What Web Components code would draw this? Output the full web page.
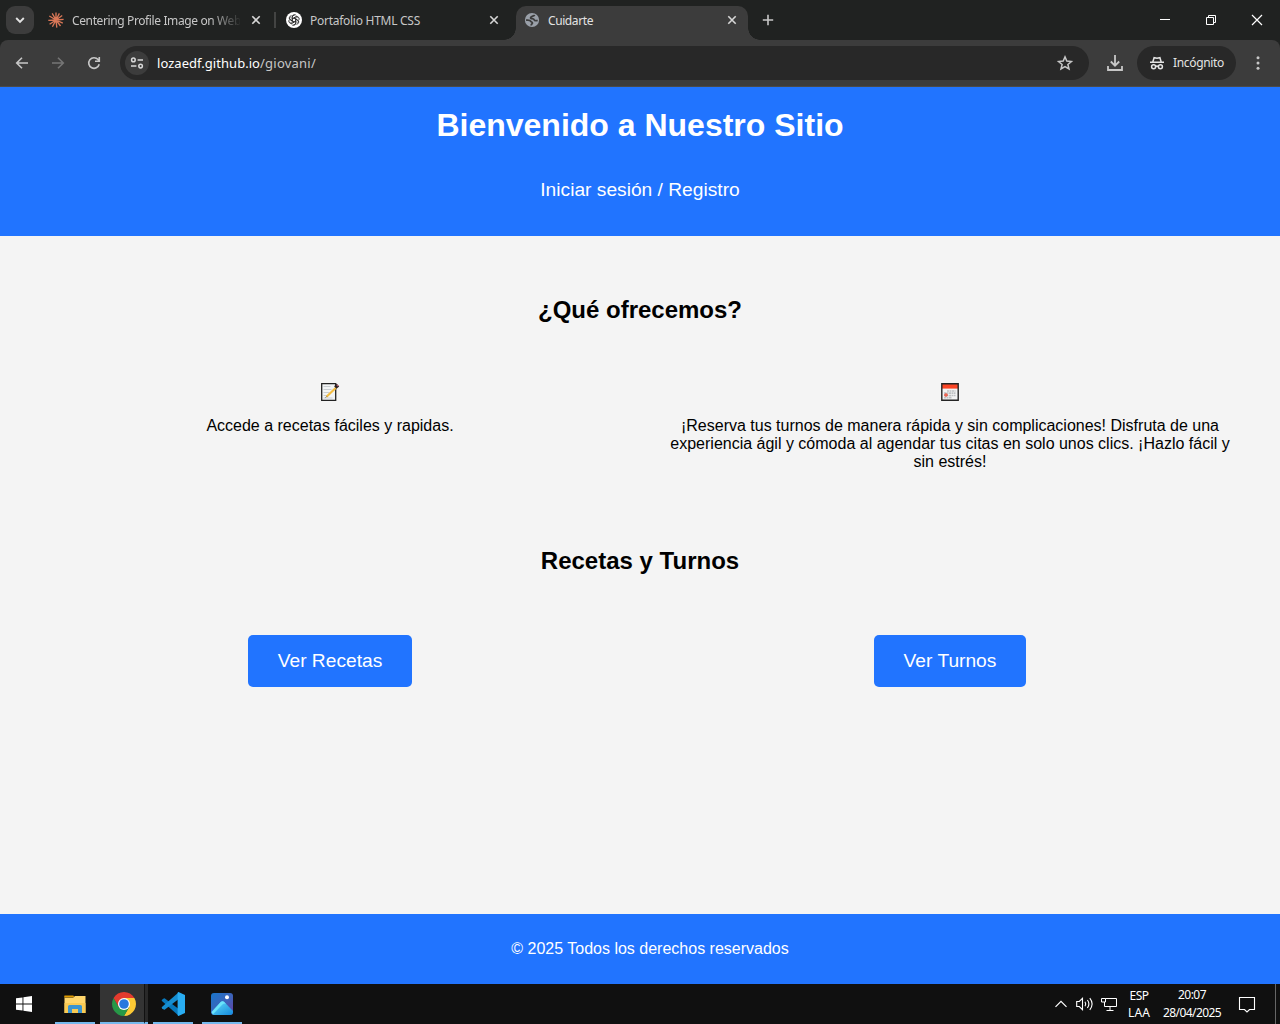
<!DOCTYPE html>
<html lang="es">
<head>
<meta charset="utf-8">
<title>Cuidarte</title>
<style>
html,body{margin:0;height:100%;overflow:hidden}
body{display:flex;flex-direction:column;background:#f4f4f4;font-family:"Liberation Sans",Arial,sans-serif;font-size:16px;color:#000}
</style>
</head>
<body>
<browser-tabs></browser-tabs>
<browser-toolbar></browser-toolbar>
<site-page></site-page>
<task-bar></task-bar>
<script>
const define = (name, css, html, ready) => customElements.define(name, class extends HTMLElement {
  constructor() {
    super();
    this.attachShadow({mode: 'open'}).innerHTML = `<style>:host,*{box-sizing:border-box}svg{display:block;overflow:visible}${css}</style>${html}`;
  }
  connectedCallback() { if (ready) ready.call(this); }
});

/* One line of interface text whose tracking is tuned to a given width. */
define('ui-label', `:host{display:block;white-space:nowrap;font-family:"Noto Sans","Open Sans",sans-serif;line-height:16px}span{display:inline-block}`,
  `<span><slot></slot></span>`, function () {
    const s = this.shadowRoot.querySelector('span'), w = +this.getAttribute('w');
    this.style.width = w + 'px';
    const n = this.textContent.length;
    s.style.letterSpacing = ((w - s.getBoundingClientRect().width) / n).toFixed(3) + 'px';
  });

define('browser-tab', `
:host{display:flex;align-items:center;position:relative;width:238px;height:34px;padding:0 14px 6px 10px;color:#c7c7c7;font-size:12px}
:host([active]){background:#3c3c3c;border-radius:10px 10px 0 0;color:#e3e3e3;width:232px;padding-left:8px;padding-right:10px}
.icon{width:16px;height:16px;margin-right:8px;flex:none}
.text{flex:1;min-width:0;overflow:hidden;padding-top:1px}
:host([fade]) .text{max-width:168px;-webkit-mask-image:linear-gradient(90deg,#000 138px,transparent 170px)}
.close{margin-left:auto;flex:none}
:host([active])::before,:host([active])::after{content:"";position:absolute;bottom:0;width:12px;height:12px}
:host([active])::before{left:-12px;background:radial-gradient(circle at 0 0,transparent 11.5px,#3c3c3c 12px)}
:host([active])::after{right:-12px;background:radial-gradient(circle at 100% 0,transparent 11.5px,#3c3c3c 12px)}
`, `<div class="icon"><slot name="icon"></slot></div><div class="text"><slot></slot></div>
<svg class="close" width="12" height="12" viewBox="0 0 12 12"><path d="M2.3 2.3l7.4 7.4M9.7 2.3L2.3 9.7" stroke="#d6d6d6" stroke-width="1.6"/></svg>`);

define('browser-tabs', `
:host{display:flex;height:40px;flex:none;background:#202221;padding-top:6px}
.drop{width:28px;height:28px;border-radius:9px;background:#3c3c3c;margin:0 4px 0 6px;display:grid;place-items:center}
.sep{width:2px;height:16px;background:#434443;margin:6px 0 0 -2px}
.t3{margin-left:2px}
.plus{margin:8px 0 0 14px}
.win{margin-left:auto;display:flex;margin-top:-6px}
.win svg{margin:14px 17px}
`, `
<div class="drop"><svg width="10" height="8" viewBox="0 0 10 8"><path d="M1.2 2L5 5.800 8.800 2" fill="none" stroke="#e3e3e3" stroke-width="1.900"/></svg></div>
<browser-tab fade>
  <svg slot="icon" width="16" height="16" viewBox="0 0 16 16" style="display:block"><path d="M8 8V.5M8 8l3.400-6.600M8 8l6.200-4.500M8 8l7.600-.700M8 8l6.800 3.200M8 8l4.500 6M8 8l.800 7.600M8 8l-3.600 6.700M8 8l-6.400 4.200M8 8L.300 8.400M8 8L1.300 4M8 8L4.200 1.300" stroke="#d97757" stroke-width="1.350"/></svg>
  <ui-label w="169">Centering Profile Image on Web</ui-label>
</browser-tab>
<div class="sep"></div>
<browser-tab>
  <svg slot="icon" width="16" height="16" viewBox="0 0 16 16" style="display:block"><circle cx="8" cy="8" r="8" fill="#fff"/><g fill="none" stroke="#222" stroke-width=".75"><path id="lobe" d="M6.200 9.100V4.900a2.300 2.300 0 0 1 4.300-1.100M6.200 7L9.400 5.100a2.300 2.300 0 0 1 3.100 1"/><use href="#lobe" transform="rotate(60 8 8)"/><use href="#lobe" transform="rotate(120 8 8)"/><use href="#lobe" transform="rotate(180 8 8)"/><use href="#lobe" transform="rotate(240 8 8)"/><use href="#lobe" transform="rotate(300 8 8)"/></g></svg>
  <ui-label w="110">Portafolio HTML CSS</ui-label>
</browser-tab>
<browser-tab active class="t3">
  <svg slot="icon" width="16" height="16" viewBox="0 0 16 16" style="display:block"><circle cx="8" cy="8" r="7.100" fill="#9aa0a9"/><path d="M10.500 2.800C10.300 4.500 7 3.700 6.600 5.600c-.3 1.700 3.400.5 3.600 2.200.2 1.500 2.200.7 3.500.9M2 8.200c1.500-.2 4-.3 4.600 1 .5 1.100 2 .5 1.800 1.900-.1.900-1.300.9-1.200 2.400" fill="none" stroke="#3c3c3c" stroke-width="1.800"/></svg>
  <ui-label w="45">Cuidarte</ui-label>
</browser-tab>
<svg class="plus" width="12" height="12" viewBox="0 0 12 12"><path d="M6 .800v10.400M.800 6h10.400" stroke="#c7c7c7" stroke-width="1.600"/></svg>
<div class="win">
<svg width="12" height="12" viewBox="0 0 12 12"><path d="M1 5.500h10" stroke="#fff"/></svg>
<svg width="12" height="12" viewBox="0 0 12 12"><path d="M1.500 3.500h7v7h-7zM3.500 3.500v-2h7v7h-2" fill="none" stroke="#fff"/></svg>
<svg width="12" height="12" viewBox="0 0 12 12"><path d="M1 1l10 10M11 1L1 11" stroke="#fff" stroke-width="1.200"/></svg>
</div>`);

define('browser-toolbar', `
:host{display:block;background:#202221;height:47px;flex:none}
.bar{display:flex;align-items:center;height:47px;background:#3c3c3c;border-bottom:1px solid #4b4a48;border-radius:8px 8px 0 0;padding-left:14px}
.nav{display:flex;gap:20px;width:106px;flex:none}
.omni{display:flex;align-items:center;width:969px;height:34px;border-radius:17px;background:#282828;padding:0 16px 0 5px}
.chip{width:24px;height:24px;border-radius:50%;background:#3c3c3c;display:grid;place-items:center;margin-right:8px}
.host{color:#fff;font-size:13px}.path{color:#c7c7c7;font-size:13px}
.star{margin-left:auto}
.dl{margin:0 13px 0 17px}
.inc{display:flex;align-items:center;width:99px;height:34px;border-radius:17px;background:#282828;padding-left:12px;font-size:12px;color:#e3e3e3;gap:8px}
.menu{margin-left:14px}
`, `<div class="bar">
<div class="nav">
<svg width="16" height="16" viewBox="0 0 16 16"><path d="M14 8H3M8 2.700L2.700 8 8 13.300" fill="none" stroke="#c7c7c7" stroke-width="1.600"/></svg>
<svg width="16" height="16" viewBox="0 0 16 16"><path d="M2 8h11M8 2.700L13.300 8 8 13.300" fill="none" stroke="#757575" stroke-width="1.600"/></svg>
<svg width="16" height="16" viewBox="0 0 16 16"><path d="M13.200 9.300A5.300 5.300 0 1 1 12.100 4.600L13.300 6M13.300 2v4.300H9" fill="none" stroke="#c7c7c7" stroke-width="1.600"/></svg>
</div>
<div class="omni"><div class="chip"><svg width="14" height="14" viewBox="0 0 14 14" fill="none" stroke="#d8d8d8" stroke-width="1.500"><circle cx="3.400" cy="3.900" r="1.800"/><path d="M7.600 3.900H13M1 10.100h5.400"/><circle cx="10.600" cy="10.100" r="1.800"/></svg></div>
<ui-label class="host" w="103">lozaedf.github.io</ui-label><ui-label class="path" w="56">/giovani/</ui-label>
<svg class="star" width="16" height="16" viewBox="0 0 16 16"><path d="M8 1.900l1.800 4.200 4.600.400-3.500 3 1.100 4.500L8 11.600 4 14l1.100-4.500-3.500-3 4.600-.400z" fill="none" stroke="#c7c7c7" stroke-width="1.500"/></svg></div>
<svg class="dl" width="18" height="18" viewBox="0 0 18 18"><path d="M9 1v10.500M4.800 7.500L9 11.700l4.200-4.200M2 12v4h14v-4" fill="none" stroke="#c7c7c7" stroke-width="1.800"/></svg>
<div class="inc"><svg width="16" height="16" viewBox="0 0 16 16" fill="none" stroke="#e3e3e3" stroke-width="1.500"><path d="M1 7.200h14M3.800 7l1.300-4.300 2.900.600 2.900-.600L12.200 7M6.600 11.500q1.400-.900 2.800 0"/><circle cx="4.600" cy="11.700" r="2"/><circle cx="11.400" cy="11.700" r="2"/></svg><ui-label w="51">Incógnito</ui-label></div>
<svg class="menu" width="16" height="16" viewBox="0 0 16 16" fill="#c7c7c7"><circle cx="8" cy="2.800" r="1.500"/><circle cx="8" cy="8" r="1.500"/><circle cx="8" cy="13.200" r="1.500"/></svg>
</div>`);

define('action-link', `
:host{display:block}a{display:block;background:#2174ff;color:#fff;border-radius:5px;padding:15px 30px;font-size:19.2px;line-height:22px}
`, `<a><slot></slot></a>`);

define('feature-item', `
:host{display:flex;flex-direction:column;align-items:center;width:580px;padding:0 10px;text-align:center;line-height:18px}
.pic{width:20px;height:20px;margin-bottom:15px}
`, `<div class="pic"><slot name="icon"></slot></div><div><slot></slot></div>`);

define('site-page', `
:host{display:flex;flex-direction:column;flex:1;min-height:0;background:#f4f4f4}
header{height:149px;flex:none;background:#2174ff;color:#fff;text-align:center;padding-top:20px}
h1{margin:0;font-size:32px;line-height:36px}
.login{font-size:19.2px;line-height:22px;margin-top:36px}
main{flex:1}
h2{margin:0;text-align:center;font-size:24px;line-height:28px}
.offer{padding-top:60px}
.row{display:flex;justify-content:space-between;padding:0 40px}
.features{margin-top:58px}
.actions h2{margin-top:76px}
.actions .row{margin-top:60px}
.cell{width:580px;display:flex;justify-content:center}
footer{height:70px;flex:none;background:#2174ff;color:#fff;text-align:center;line-height:18px;padding:26px 0 0 20px}
`, `
<header><h1>Bienvenido a Nuestro Sitio</h1><div class="login">Iniciar sesión / Registro</div></header>
<main>
<section class="offer"><h2>¿Qué ofrecemos?</h2>
<div class="row features">
<feature-item><svg slot="icon" width="20" height="20" viewBox="0 0 20 20" style="display:block"><path d="M1.700 1.700h14v16.600h-14z" fill="#f2f4f5" stroke="#222" stroke-width="1.300"/><path d="M3.500 4.500h7M3.500 7.500h8M3.500 10.500h6M3.500 13.500h4M3.500 16h9" stroke="#c9ced1"/><path d="M6.500 14.700L16.700 5" stroke="#f4bd42" stroke-width="2.200"/><path d="M15.300 5.500l2.700-2.300" stroke="#2b2224" stroke-width="3.600"/><path d="M17 4l1-1" stroke="#b85c6b" stroke-width="1.600"/><path d="M5.700 15.500l1-1" stroke="#444"/></svg>Accede a recetas fáciles y rapidas.</feature-item>
<feature-item><svg slot="icon" width="20" height="20" viewBox="0 0 20 20" style="display:block"><path d="M2 2h16v16H2z" fill="#f3f3f3"/><path d="M2 2h16v4.600H2z" fill="#fb4525"/><path d="M1.800 1.800h16.400v16.400H1.800z" fill="none" stroke="#242424" stroke-width="1.400"/><path d="M7 9h8.500M4 11.200h11.500M4 13.500h11.500M4 15.700h8" stroke="#bfc1c3" stroke-width="1.700" stroke-dasharray="2 .500"/><path d="M4 13h4M6 11v4" stroke="#ed5b48" stroke-width="1.300"/></svg>¡Reserva tus turnos de manera rápida y sin complicaciones! Disfruta de una experiencia ágil y cómoda al agendar tus citas en solo unos clics. ¡Hazlo fácil y sin estrés!</feature-item>
</div></section>
<section class="actions"><h2>Recetas y Turnos</h2>
<div class="row"><div class="cell"><action-link>Ver Recetas</action-link></div><div class="cell"><action-link>Ver Turnos</action-link></div></div></section>
</main>
<footer>© 2025 Todos los derechos reservados</footer>`);

define('task-button', `
:host{display:grid;place-items:center;width:40px;height:40px;border-bottom:2px solid #76b9ed;padding-top:2px;flex:none}
`, `<slot></slot>`);

define('task-bar', `
:host{display:flex;height:40px;flex:none;background:#101010;color:#fff;font-size:12px}
.start{margin:12px 15px 0 16px;flex:none}
.files{margin-left:0}
.chrome{width:44px;background:#343434;margin-left:5px;padding-left:4px}
.stack{width:4px;height:40px;background:#292929;border-left:1px solid #111;border-bottom:2px solid #76b9ed;margin-right:5px}
.photos{margin-left:9px}
.tray{margin-left:auto;display:flex;align-items:center}
.lang{width:22px;display:flex;flex-direction:column;align-items:center;gap:1px;margin:1px 13px 0 11px}
.clock{width:58px;display:flex;flex-direction:column;align-items:center;margin-right:17px}
.end{width:1px;height:40px;background:#666;margin:0 4px 0 19px}
`, `
<svg class="start" width="16" height="16" viewBox="0 0 16 16" fill="#fff"><path d="M0 2.300l6.500-.900v6.100H0zM7.400 1.200L16 0v7.500H7.400zM0 8.500h6.500v6.100L0 13.700zM7.400 8.500H16V16l-8.600-1.200z"/></svg>
<task-button class="files" style="margin-left:8px"><svg width="22" height="20" viewBox="0 0 22 20"><path d="M.500 1.500h8.800l1.400 2H0z" fill="#e09b00"/><path d="M.500 3.800h8.700L11 2h10.500v17H.500z" fill="#ffd66b"/><path d="M.500 9h21v10H.500z" fill="#f9ca53"/><path d="M4 19v-6.500q0-1.500 1.500-1.500h11q1.500 0 1.500 1.500V19h-4v-4H8v4z" fill="#3994d2"/></svg></task-button>
<task-button class="chrome"><svg width="24" height="24" viewBox="0 0 24 24"><path d="M12 6h10.390A12 12 0 0 1 12 24l5.200-9z" fill="#fcc934"/><path d="M6.800 15L1.610 6A12 12 0 0 0 12 24l5.200-9z" fill="#279847"/><path d="M12 6h10.390A12 12 0 0 0 1.610 6l5.190 9z" fill="#e33b2e"/><circle cx="12" cy="12" r="6" fill="#fff"/><circle cx="12" cy="12" r="4.800" fill="#2878df"/></svg></task-button>
<div class="stack"></div>
<task-button><svg width="24" height="24" viewBox="0 0 24 24"><path d="M1 7.800l1.700-1.400q.600-.400 1.200 0L18 17.300V24L.900 9q-.500-.600.100-1.200z" fill="#0879bd"/><path d="M1 16.200l1.700 1.400q.600.400 1.200 0L18 6.700V0L.900 15q-.500.600.100 1.200z" fill="#168ed1"/><path d="M17.500 0L24 3v18l-6.500 3q-.900-.300-.900-1V1q0-.700.900-1z" fill="#29adf2"/></svg></task-button>
<task-button class="photos"><svg width="22" height="22" viewBox="0 0 22 22"><defs><linearGradient id="ph" x2="1" y2="1"><stop stop-color="#1876ca"/><stop offset=".55" stop-color="#3e62b9"/><stop offset="1" stop-color="#653ba0"/></linearGradient><linearGradient id="mt" x2="1" y2="1"><stop stop-color="#67e3fb"/><stop offset="1" stop-color="#1387db"/></linearGradient></defs><rect width="22" height="22" rx="3" fill="url(#ph)"/><path d="M.500 19L10 8.800q1.500-1.300 3 0L22 18v1q0 3-3 3H3q-2 0-2.500-3z" fill="url(#mt)"/><path d="M.600 19L10 8.800q1.500-1.300 3 0l2 2.100q-2-1-3.600.700L2 21.300q-1-.800-1.400-2.300z" fill="#6ae4fb"/><circle cx="16" cy="4.200" r="2" fill="#fff"/></svg></task-button>
<div class="tray">
<svg width="12" height="8" viewBox="0 0 12 8"><path d="M.500 6.800L6 1.300l5.500 5.500" fill="none" stroke="#fff" stroke-width="1.200"/></svg>
<svg width="18" height="16" viewBox="0 0 18 16" style="margin:0 7px 0 9px"><path d="M.700 5.500h2.600L6.500 2.300v11.400L3.300 10.500H.700zM9 5.800q1.500 2.200 0 4.400M11.400 4q3 4 0 8M13.800 2.200q4.600 5.800 0 11.600" fill="none" stroke="#fff" stroke-width="1.100"/></svg>
<svg width="16" height="16" viewBox="0 0 16 16"><path d="M4.500 2.500h11v8H3.500V6M5.500 14.500h7M9 10.500v4M.500 2.500h4v3.500h-4z" fill="none" stroke="#fff"/></svg>
<div class="lang"><ui-label w="19">ESP</ui-label><ui-label w="22">LAA</ui-label></div>
<div class="clock"><ui-label w="28">20:07</ui-label><ui-label style="margin-top:2px" w="58">28/04/2025</ui-label></div>
<svg width="18" height="18" viewBox="0 0 18 18"><path d="M1.500 2.500h15v12H11.500L9 17l-2.500-2.500h-5z" fill="none" stroke="#fff" stroke-width="1.100"/></svg>
<div class="end"></div>
</div>`);
</script>
</body>
</html>
